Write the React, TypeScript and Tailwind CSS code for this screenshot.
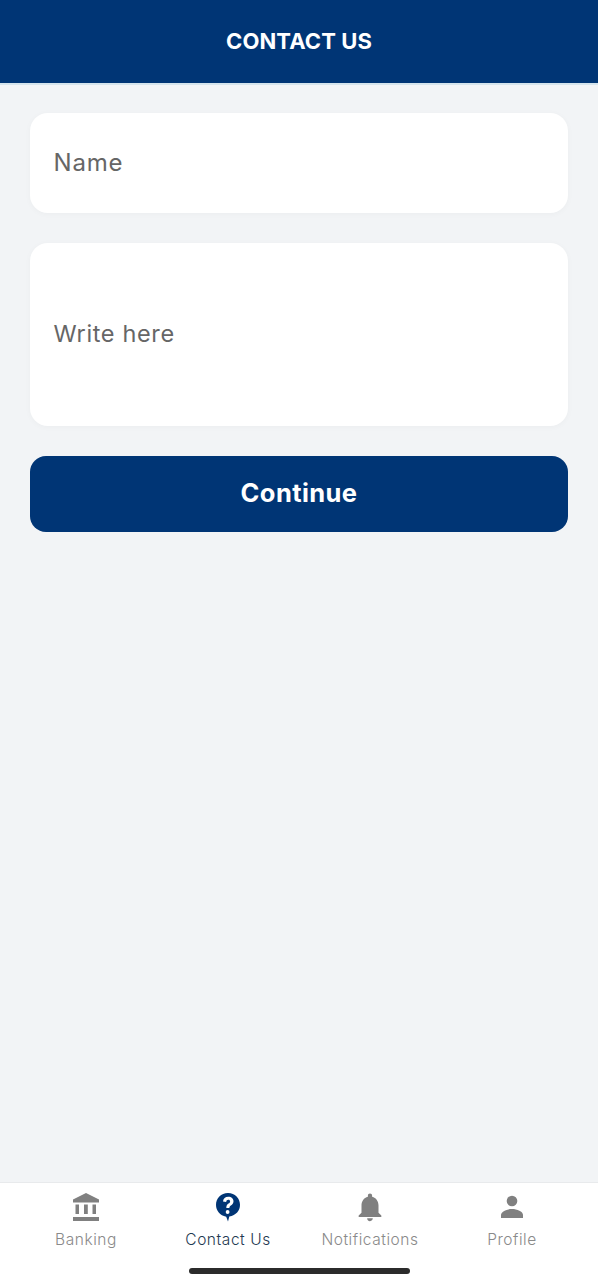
import { MdNotifications } from "react-icons/md";
import type { ReactNode } from "react";

function BankIcon() {
  return (
    <svg width="28" height="28" viewBox="0 0 28 28" fill="#808080" aria-hidden="true">
      <path d="M14 0 27 6.500V9.500H1V6.500Z" />
      <rect x="3.500" y="11.500" width="3.500" height="9.500" />
      <rect x="12" y="11.500" width="3.800" height="9.500" />
      <rect x="20.500" y="11.500" width="3.500" height="9.500" />
      <rect x="1" y="24" width="26" height="4" />
    </svg>
  );
}

function HelpBubble() {
  return (
    <svg width="26" height="30" viewBox="0 0 26 30" aria-hidden="true">
      <path
        d="M13 1C6 1 1 6.300 1 12.800c0 6 4 10.700 10.200 11.900l1.800 4.700 1.300-4.800C21 23.500 25 18.600 25 12.800 25 6.300 20 1 13 1Z"
        fill="#003575"
      />
      <path
        d="M8 9.600c.2-3 2.300-4.900 5.300-4.900 3.100 0 5.200 1.800 5.200 4.500 0 2-1.100 3.200-2.600 4.200-1.200.8-1.500 1.400-1.500 2.700h-3.100c0-2.200.7-3.400 2.200-4.500 1-.8 1.600-1.300 1.600-2.200 0-1-.7-1.600-1.800-1.600-1.200 0-2 .8-2.100 2.100Z"
        fill="#ffffff"
      />
      <circle cx="12.600" cy="20" r="1.900" fill="#ffffff" />
    </svg>
  );
}

function PersonIcon() {
  return (
    <svg width="24" height="24" viewBox="0 0 24 24" fill="#808080" aria-hidden="true">
      <circle cx="12" cy="6" r="5.300" />
      <path d="M1 23v-3c0-3.500 6-6 11-6s11 2.500 11 6v3Z" />
    </svg>
  );
}

function NavItem({
  icon,
  label,
  active,
}: {
  icon: ReactNode;
  label: string;
  active?: boolean;
}) {
  return (
    <div className="flex w-[142px] flex-col items-center">
      <div
        className={`flex h-[32px] items-center justify-center ${
          active ? "text-[#003575]" : "text-[#808080]"
        }`}
      >
        {icon}
      </div>
      <span
        className={`mt-[7px] text-[15.500px] leading-[20px] font-light tracking-[0.55px] ${
          active ? "text-[#1f3a52]" : "text-[#8a8a8a]"
        }`}
      >
        {label}
      </span>
    </div>
  );
}

export default function App() {
  return (
    <div className="flex h-[1280px] w-[598px] flex-col overflow-hidden bg-[#f2f4f6] font-['Inter',sans-serif]">
      <header className="flex h-[85px] shrink-0 items-center justify-center border-b-2 border-[#d5e4ec] bg-[#003575]">
        <h1 className="text-[22px] font-bold tracking-[0.1px] text-white">CONTACT US</h1>
      </header>

      <main className="flex flex-1 flex-col gap-[30px] px-[30px] pt-[28px]">
        <div className="flex h-[100px] items-center rounded-[18px] bg-white px-[23.500px] shadow-[0_1px_6px_rgba(0,0,0,0.03)]">
          <span className="text-[24px] tracking-[0.8px] text-[#666666]">Name</span>
        </div>
        <div className="flex h-[183px] items-center rounded-[18px] bg-white px-[23.500px] pb-[2px] shadow-[0_1px_6px_rgba(0,0,0,0.03)]">
          <span className="text-[23.500px] tracking-[0.65px] text-[#666666]">Write here</span>
        </div>
        <button className="flex h-[76px] items-center justify-center rounded-[16px] bg-[#003575] pb-[2px] text-[25.500px] font-bold tracking-[0.4px] text-white">
          Continue
        </button>
      </main>

      <nav className="flex h-[98px] shrink-0 flex-col border-t border-[#e8eaec] bg-white">
        <div className="flex justify-center pt-[8px]">
          <NavItem icon={<BankIcon />} label="Banking" />
          <NavItem icon={<HelpBubble />} label="Contact Us" active />
          <NavItem icon={<MdNotifications size={34} />} label="Notifications" />
          <NavItem icon={<PersonIcon />} label="Profile" />
        </div>
        <div className="mt-[18px] h-[6px] w-[221px] self-center rounded-full bg-[#2b2b2b]" />
      </nav>
    </div>
  );
}
